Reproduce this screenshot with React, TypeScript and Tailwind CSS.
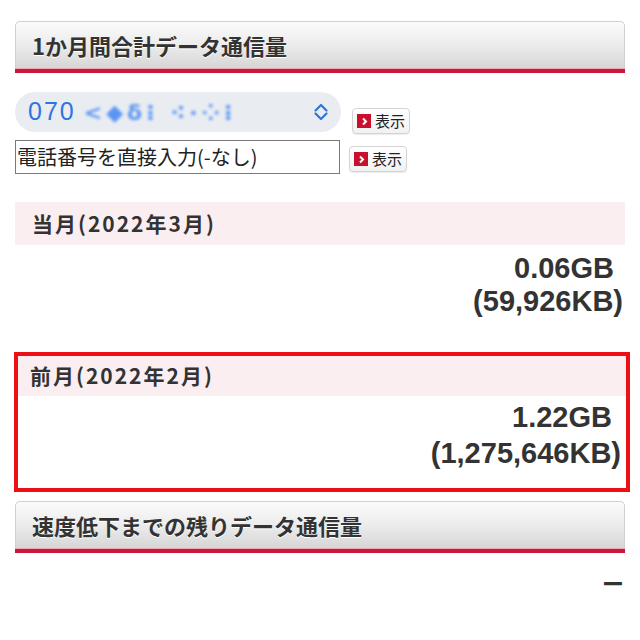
import { ReactNode } from "react";

function SectionHeader({ title }: { title: string }) {
  return (
    <div>
      <div className="h-[47px] rounded-t-[5px] border border-b-0 border-[#d0d0d0] bg-gradient-to-b from-[#fbfbfb] via-[#ececec] to-[#d6d6d6] flex items-center pl-[16px] text-[22px] font-bold text-[#333] [text-shadow:0_1px_0_#fff]">
        {title}
      </div>
      <div className="h-[5px] bg-[#c8173a] border-t border-[#eea8b4]" />
    </div>
  );
}

function ShowButton() {
  return (
    <button className="h-[26px] w-[58px] flex items-center gap-[4px] pl-[4px] rounded-[4px] border border-[#d4d4d4] bg-gradient-to-b from-white to-[#f1f1f1] text-[15px] text-[#222] shadow-[0_1px_1px_rgba(0,0,0,0.08)]">
      <span className="w-[14px] h-[14px] bg-[#c8102e] flex items-center justify-center">
        <svg width="9" height="9" viewBox="0 0 9 9">
          <path d="M3 1.5l3 3-3 3" fill="none" stroke="#fff" strokeWidth="2" />
        </svg>
      </span>
      表示
    </button>
  );
}

function Values({ gb, kb, className = "" }: { gb: string; kb: string; className?: string }) {
  return (
    <div className={`text-right font-['Liberation_Sans',sans-serif] font-bold text-[29px] text-[#333] ${className}`}>
      <div className="pr-[9px]">{gb}</div>
      <div>{kb}</div>
    </div>
  );
}

function PinkLabel({ children, className = "" }: { children: ReactNode; className?: string }) {
  return (
    <div className={`bg-[#fbeef1] flex items-center text-[21px] tracking-[2px] font-bold text-[#333] ${className}`}>
      {children}
    </div>
  );
}

export default function App() {
  return (
    <div className="w-[640px] h-[640px] overflow-hidden bg-white pt-[21px] px-[15px] font-['Noto_Sans_CJK_JP',sans-serif]">
      <SectionHeader title="1か月間合計データ通信量" />

      <div className="mt-[19px] flex items-start">
        <div className="w-[326px] h-[40px] rounded-full bg-[#e9edf2] flex items-center pl-[13px] pr-[12px]">
          <span className="font-['Liberation_Sans',sans-serif] text-[25px] text-[#2f74e0] tracking-[2px]">070</span>
          {/* number is masked in the screenshot */}
          <span className="ml-[8px] font-['DejaVu_Sans',sans-serif] text-[22px] font-bold text-[#5b95f2] blur-[1.4px] tracking-[4px]">
            &lt;◆δ⁝ ⁖·⁘⁝
          </span>
          <svg className="ml-auto" width="16" height="20" viewBox="0 0 16 20">
            <path d="M2.5 8.5L8 3l5.5 5.5M2.5 11.5L8 17l5.5-5.5" fill="none" stroke="#2f74e0" strokeWidth="2.2" strokeLinecap="round" strokeLinejoin="round" />
          </svg>
        </div>
        <div className="ml-[11px] mt-[16px]">
          <ShowButton />
        </div>
      </div>

      <div className="mt-[6px] flex items-center">
        <div className="w-[325px] h-[34px] border border-[#7a7a7a] flex items-center pl-[1px] text-[20px] text-[#222]">
          電話番号を直接入力(-なし)
        </div>
        <div className="ml-[9px] mt-[4px]">
          <ShowButton />
        </div>
      </div>

      <PinkLabel className="mt-[28px] h-[43px] pl-[17px]">当月(2022年3月)</PinkLabel>
      <Values gb="0.06GB" kb="(59,926KB)" className="mt-[7px] pr-[2px] leading-[33px]" />

      <div className="mt-[34px] -ml-[1px] -mr-[5px] border-4 border-[#ee0f14] pb-[17px]">
        <PinkLabel className="h-[40px] pl-[12px]">前月(2022年2月)</PinkLabel>
        <Values gb="1.22GB" kb="(1,275,646KB)" className="mt-[3px] pr-[5px] leading-[36px]" />
      </div>

      <div className="mt-[9px]">
        <SectionHeader title="速度低下までの残りデータ通信量" />
      </div>

      <div className="mt-[12px] text-right text-[22px] font-bold leading-[34px] text-[#333] pr-[1px]">ー</div>
    </div>
  );
}
